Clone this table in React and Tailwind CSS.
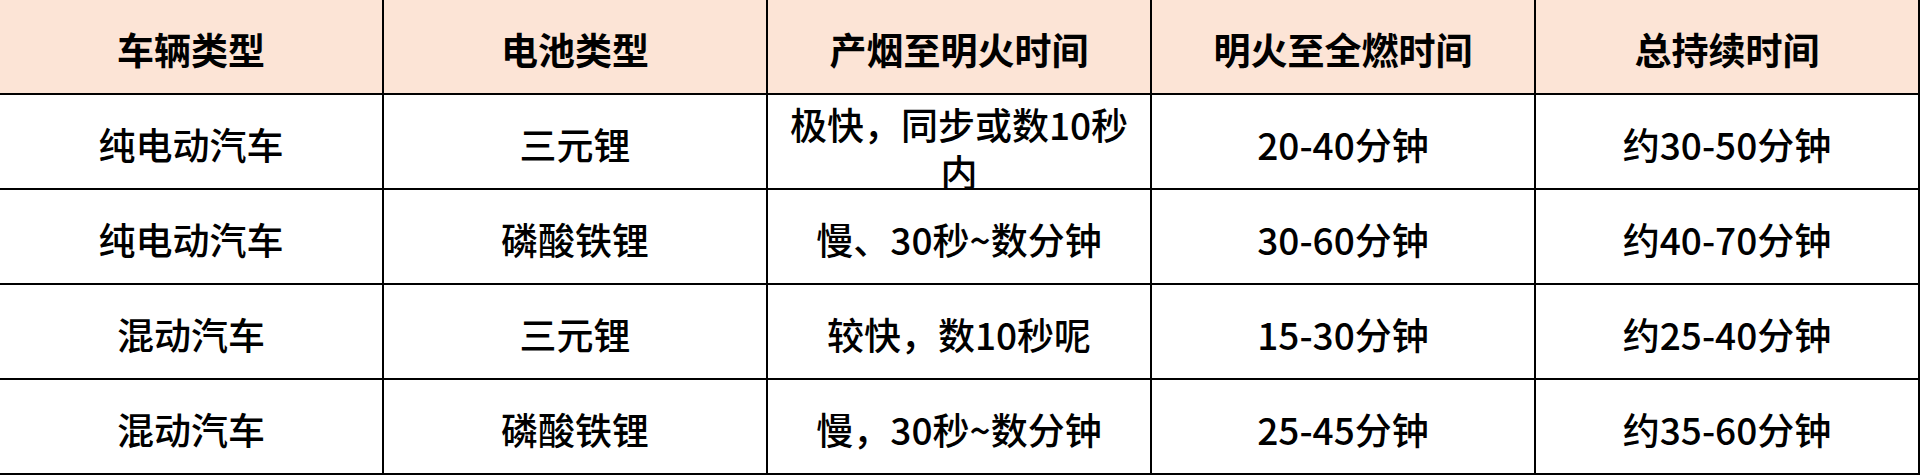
const headers = ["车辆类型", "电池类型", "产烟至明火时间", "明火至全燃时间", "总持续时间"];

const rows = [
  ["纯电动汽车", "三元锂", "极快，同步或数10秒内", "20-40分钟", "约30-50分钟"],
  ["纯电动汽车", "磷酸铁锂", "慢、30秒~数分钟", "30-60分钟", "约40-70分钟"],
  ["混动汽车", "三元锂", "较快，数10秒呢", "15-30分钟", "约25-40分钟"],
  ["混动汽车", "磷酸铁锂", "慢，30秒~数分钟", "25-45分钟", "约35-60分钟"],
];

function Cell({ children, head, wrap }) {
  return (
    <div
      className={
        "flex h-[95px] justify-center overflow-hidden border-r-2 border-b-2 border-black px-3 text-center text-[37px] text-black " +
        (head ? "bg-[#fce4d6] font-bold " : "bg-white font-medium ") +
        (wrap ? "items-start pt-[6px] leading-[47px]" : "items-center pt-[6px] leading-[47px]")
      }
    >
      <span>{children}</span>
    </div>
  );
}

export default function App() {
  return (
    <div className="h-[475px] w-[1920px] bg-white font-['Noto_Sans_CJK_SC',sans-serif]">
      <div className="grid grid-cols-5">
        {headers.map((h) => (
          <Cell key={h} head>
            {h}
          </Cell>
        ))}
        {rows.map((row, i) =>
          row.map((text, j) => (
            <Cell key={i + "-" + j} wrap={text.length > 10}>
              {text}
            </Cell>
          ))
        )}
      </div>
    </div>
  );
}
